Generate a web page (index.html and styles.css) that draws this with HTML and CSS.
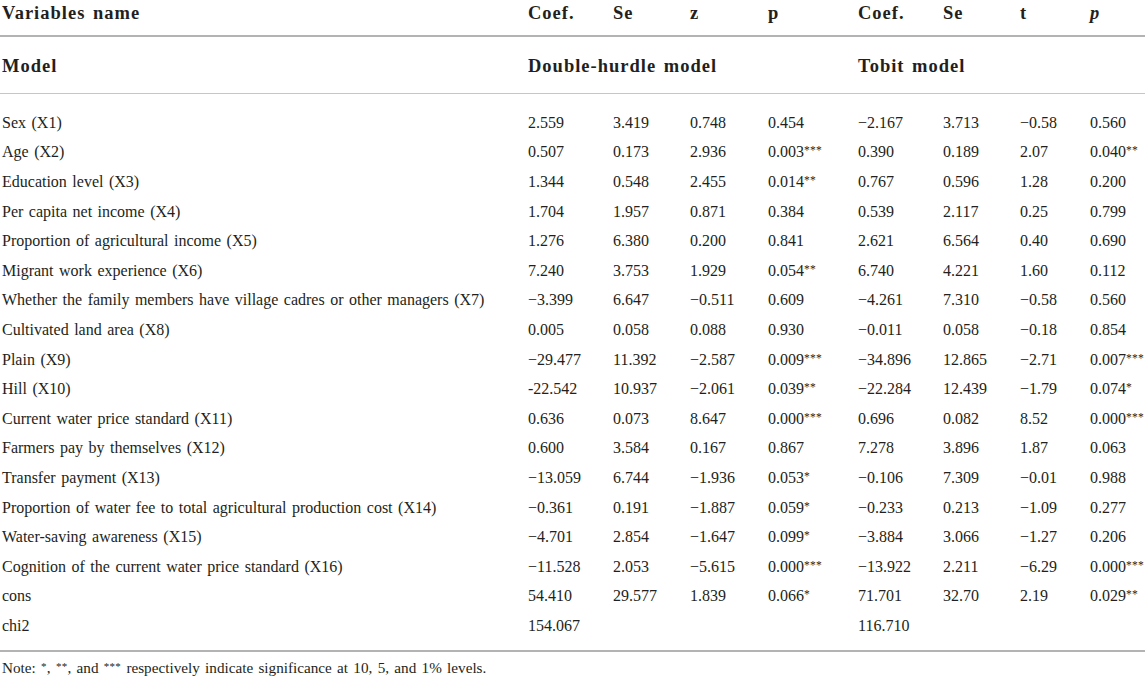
FILE: index.html
```html
<!DOCTYPE html>
<html lang="en">
<head>
<meta charset="utf-8">
<title>Regression results</title>
<link rel="stylesheet" href="styles.css">
</head>
<body>
<table class="results">
  <colgroup>
    <col class="c-label"><col class="c-coef"><col class="c-se"><col class="c-z"><col class="c-p">
    <col class="c-coef2"><col class="c-se2"><col class="c-t"><col class="c-p2">
  </colgroup>
  <thead>
    <tr class="head-top">
      <th>Variables name</th><th>Coef.</th><th>Se</th><th>z</th><th>p</th>
      <th>Coef.</th><th>Se</th><th>t</th><th><i>p</i></th>
    </tr>
    <tr class="head-model">
      <th>Model</th><th colspan="4">Double-hurdle model</th><th colspan="4">Tobit model</th>
    </tr>
  </thead>
  <tbody>
    <tr class="first"><td>Sex (X1)</td><td>2.559</td><td>3.419</td><td>0.748</td><td>0.454</td><td>−2.167</td><td>3.713</td><td>−0.58</td><td>0.560</td></tr>
    <tr><td>Age (X2)</td><td>0.507</td><td>0.173</td><td>2.936</td><td>0.003<sup>***</sup></td><td>0.390</td><td>0.189</td><td>2.07</td><td>0.040<sup>**</sup></td></tr>
    <tr><td>Education level (X3)</td><td>1.344</td><td>0.548</td><td>2.455</td><td>0.014<sup>**</sup></td><td>0.767</td><td>0.596</td><td>1.28</td><td>0.200</td></tr>
    <tr><td>Per capita net income (X4)</td><td>1.704</td><td>1.957</td><td>0.871</td><td>0.384</td><td>0.539</td><td>2.117</td><td>0.25</td><td>0.799</td></tr>
    <tr><td>Proportion of agricultural income (X5)</td><td>1.276</td><td>6.380</td><td>0.200</td><td>0.841</td><td>2.621</td><td>6.564</td><td>0.40</td><td>0.690</td></tr>
    <tr><td>Migrant work experience (X6)</td><td>7.240</td><td>3.753</td><td>1.929</td><td>0.054<sup>**</sup></td><td>6.740</td><td>4.221</td><td>1.60</td><td>0.112</td></tr>
    <tr><td>Whether the family members have village cadres or other managers (X7)</td><td>−3.399</td><td>6.647</td><td>−0.511</td><td>0.609</td><td>−4.261</td><td>7.310</td><td>−0.58</td><td>0.560</td></tr>
    <tr><td>Cultivated land area (X8)</td><td>0.005</td><td>0.058</td><td>0.088</td><td>0.930</td><td>−0.011</td><td>0.058</td><td>−0.18</td><td>0.854</td></tr>
    <tr><td>Plain (X9)</td><td>−29.477</td><td>11.392</td><td>−2.587</td><td>0.009<sup>***</sup></td><td>−34.896</td><td>12.865</td><td>−2.71</td><td>0.007<sup>***</sup></td></tr>
    <tr><td>Hill (X10)</td><td>-22.542</td><td>10.937</td><td>−2.061</td><td>0.039<sup>**</sup></td><td>−22.284</td><td>12.439</td><td>−1.79</td><td>0.074<sup>*</sup></td></tr>
    <tr><td>Current water price standard (X11)</td><td>0.636</td><td>0.073</td><td>8.647</td><td>0.000<sup>***</sup></td><td>0.696</td><td>0.082</td><td>8.52</td><td>0.000<sup>***</sup></td></tr>
    <tr><td>Farmers pay by themselves (X12)</td><td>0.600</td><td>3.584</td><td>0.167</td><td>0.867</td><td>7.278</td><td>3.896</td><td>1.87</td><td>0.063</td></tr>
    <tr><td>Transfer payment (X13)</td><td>−13.059</td><td>6.744</td><td>−1.936</td><td>0.053<sup>*</sup></td><td>−0.106</td><td>7.309</td><td>−0.01</td><td>0.988</td></tr>
    <tr><td>Proportion of water fee to total agricultural production cost (X14)</td><td>−0.361</td><td>0.191</td><td>−1.887</td><td>0.059<sup>*</sup></td><td>−0.233</td><td>0.213</td><td>−1.09</td><td>0.277</td></tr>
    <tr><td>Water-saving awareness (X15)</td><td>−4.701</td><td>2.854</td><td>−1.647</td><td>0.099<sup>*</sup></td><td>−3.884</td><td>3.066</td><td>−1.27</td><td>0.206</td></tr>
    <tr><td>Cognition of the current water price standard (X16)</td><td>−11.528</td><td>2.053</td><td>−5.615</td><td>0.000<sup>***</sup></td><td>−13.922</td><td>2.211</td><td>−6.29</td><td>0.000<sup>***</sup></td></tr>
    <tr><td>cons</td><td>54.410</td><td>29.577</td><td>1.839</td><td>0.066<sup>*</sup></td><td>71.701</td><td>32.70</td><td>2.19</td><td>0.029<sup>**</sup></td></tr>
    <tr class="last"><td>chi2</td><td>154.067</td><td></td><td></td><td></td><td>116.710</td><td></td><td></td><td></td></tr>
  </tbody>
</table>
<p class="note">Note: <sup>*</sup>, <sup>**</sup>, and <sup>***</sup> respectively indicate significance at 10, 5, and 1% levels.</p>
</body>
</html>
```

FILE: styles.css
```css
html, body {
  margin: 0;
  padding: 0;
  background: #ffffff;
}

body {
  font-family: "Liberation Serif", "Times New Roman", serif;
  color: #231f20;
  width: 1145px;
}

.results {
  width: 1145px;
  border-collapse: collapse;
  table-layout: fixed;
}

.c-label { width: 526px; }
.c-coef { width: 85px; }
.c-se { width: 77px; }
.c-z { width: 78px; }
.c-p { width: 90px; }
.c-coef2 { width: 85px; }
.c-se2 { width: 77px; }
.c-t { width: 70px; }
.c-p2 { width: 57px; }

.results th,
.results td {
  text-align: left;
  padding: 0 0 0 2px;
  white-space: nowrap;
  vertical-align: middle;
}

.results th {
  font-weight: bold;
  font-size: 18.5px;
  letter-spacing: 1px;
  word-spacing: 2px;
}

.head-top th {
  height: 36px;
  border-bottom: 2px solid #b3b3b3;
  padding-bottom: 8px;
  box-sizing: border-box;
}

.head-model th {
  height: 57px;
  padding-top: 4px;
  border-bottom: 1px solid #c6c6c6;
  box-sizing: border-box;
}

.results td {
  font-size: 16px;
  height: 29.6px;
  word-spacing: 1.5px;
  box-sizing: border-box;
}

.results tr.first td {
  height: 44.6px;
  padding-top: 15px;
}

.results tr.last td {
  height: 40px;
  padding-bottom: 10px;
  border-bottom: 2px solid #b3b3b3;
}

.results sup,
.note sup {
  font-size: 0.72em;
  vertical-align: 0.3em;
  line-height: 0;
  letter-spacing: 0.3px;
}

.note {
  margin: 7px 0 0 2px;
  font-size: 15.2px;
  word-spacing: 1.5px;
}
```
